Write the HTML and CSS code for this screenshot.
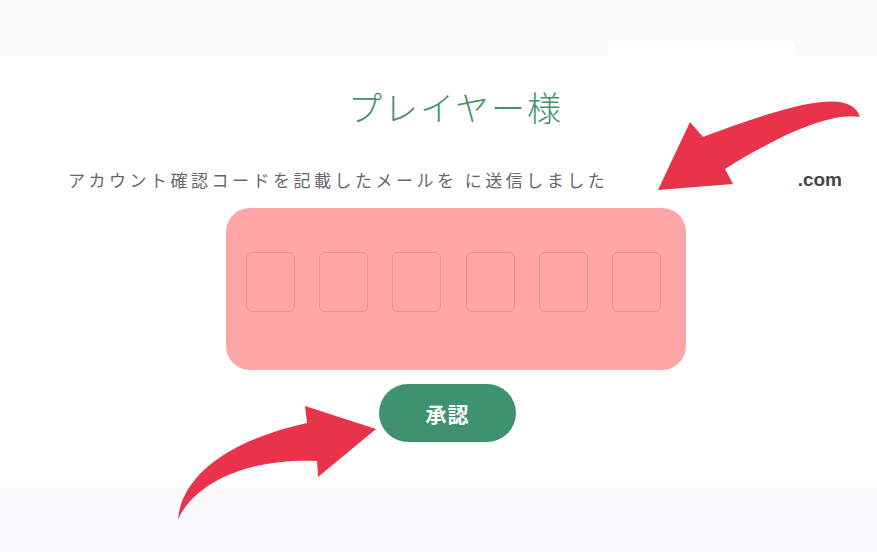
FILE: index.html
```html
<!DOCTYPE html>
<html lang="ja">
<head>
<meta charset="utf-8">
<title>確認コード</title>
<link rel="stylesheet" href="styles.css">
</head>
<body>
<div class="page">
  <header class="topbar"><div class="tab"></div></header>
  <main class="main">
    <h1 class="title">プレイヤー様</h1>
    <div class="notice">
      <p class="msg">アカウント確認コードを記載したメールを に送信しました</p>
      <span class="domain">.com</span>
    </div>
    <div class="panel">
      <div class="codes">
        <span class="box"></span><span class="box"></span><span class="box"></span><span class="box"></span><span class="box"></span><span class="box"></span>
      </div>
    </div>
    <button class="approve">承認</button>
  </main>
  <footer class="bottombar"></footer>
  <svg class="arrows" width="877" height="552" viewBox="0 0 877 552">
    <path fill="#e8334a" d="M860,117 C852,92 810,96 703,137 L690,122 L658,190 L733,184 L725,169 C778,136 830,112 860,117 Z"/>
    <path fill="#e8334a" d="M178,519 C182,475 230,440 307,423 L305,406 L376,429 L318,477 L317,461 C262,458 200,475 178,519 Z"/>
  </svg>
</div>
</body>
</html>
```
FILE: styles.css
```css
html, body {
  margin: 0;
  padding: 0;
  background: #ffffff;
}
.page {
  position: relative;
  width: 877px;
  height: 552px;
  overflow: hidden;
  font-family: "Noto Sans CJK JP", "Noto Sans", sans-serif;
}
.topbar {
  height: 56px;
  background: #fbfbfb;
  display: flex;
  align-items: flex-end;
}
.tab {
  width: 187px;
  height: 14px;
  margin-left: 608px;
  background: #ffffff;
}
.main {
  height: 430px;
  background: #ffffff;
  display: flex;
  flex-direction: column;
  align-items: center;
  padding-left: 34px;
  box-sizing: border-box;
}
.title {
  margin: 30px 0 0 0;
  font-size: 34px;
  line-height: 41px;
  font-weight: 300;
  color: #46916f;
  letter-spacing: 2px;
}
.notice {
  align-self: stretch;
  margin-left: -34px;
  margin-top: 41px;
  height: 24px;
  display: flex;
  justify-content: space-between;
  align-items: center;
  padding: 0 35px 0 68px;
}
.msg {
  margin: 0;
  font-size: 17px;
  line-height: 24px;
  letter-spacing: 3.5px;
  color: #676767;
  font-weight: 400;
}
.domain {
  font-family: "Liberation Sans", Arial, sans-serif;
  font-weight: bold;
  font-size: 19px;
  color: #454545;
}
.panel {
  margin-top: 16px;
  width: 460px;
  height: 162px;
  box-sizing: border-box;
  background: #ffa6a6;
  border-radius: 24px;
  padding: 44px 0 0 20px;
}
.codes {
  display: flex;
  gap: 24.4px;
}
.box {
  width: 49px;
  height: 60px;
  box-sizing: border-box;
  border: 1.5px solid #e99292;
  border-radius: 6px;
}
.approve {
  margin-top: 14px;
  margin-right: 16px;
  width: 137px;
  height: 58px;
  border: none;
  border-radius: 29px;
  background: #3e9270;
  color: #ffffff;
  font-family: "Noto Sans CJK JP", sans-serif;
  font-weight: bold;
  font-size: 21px;
  letter-spacing: 1px;
}
.bottombar {
  height: 66px;
  background: #fbfbfd;
}
.arrows {
  position: absolute;
  left: 0;
  top: 0;
  pointer-events: none;
}
```
